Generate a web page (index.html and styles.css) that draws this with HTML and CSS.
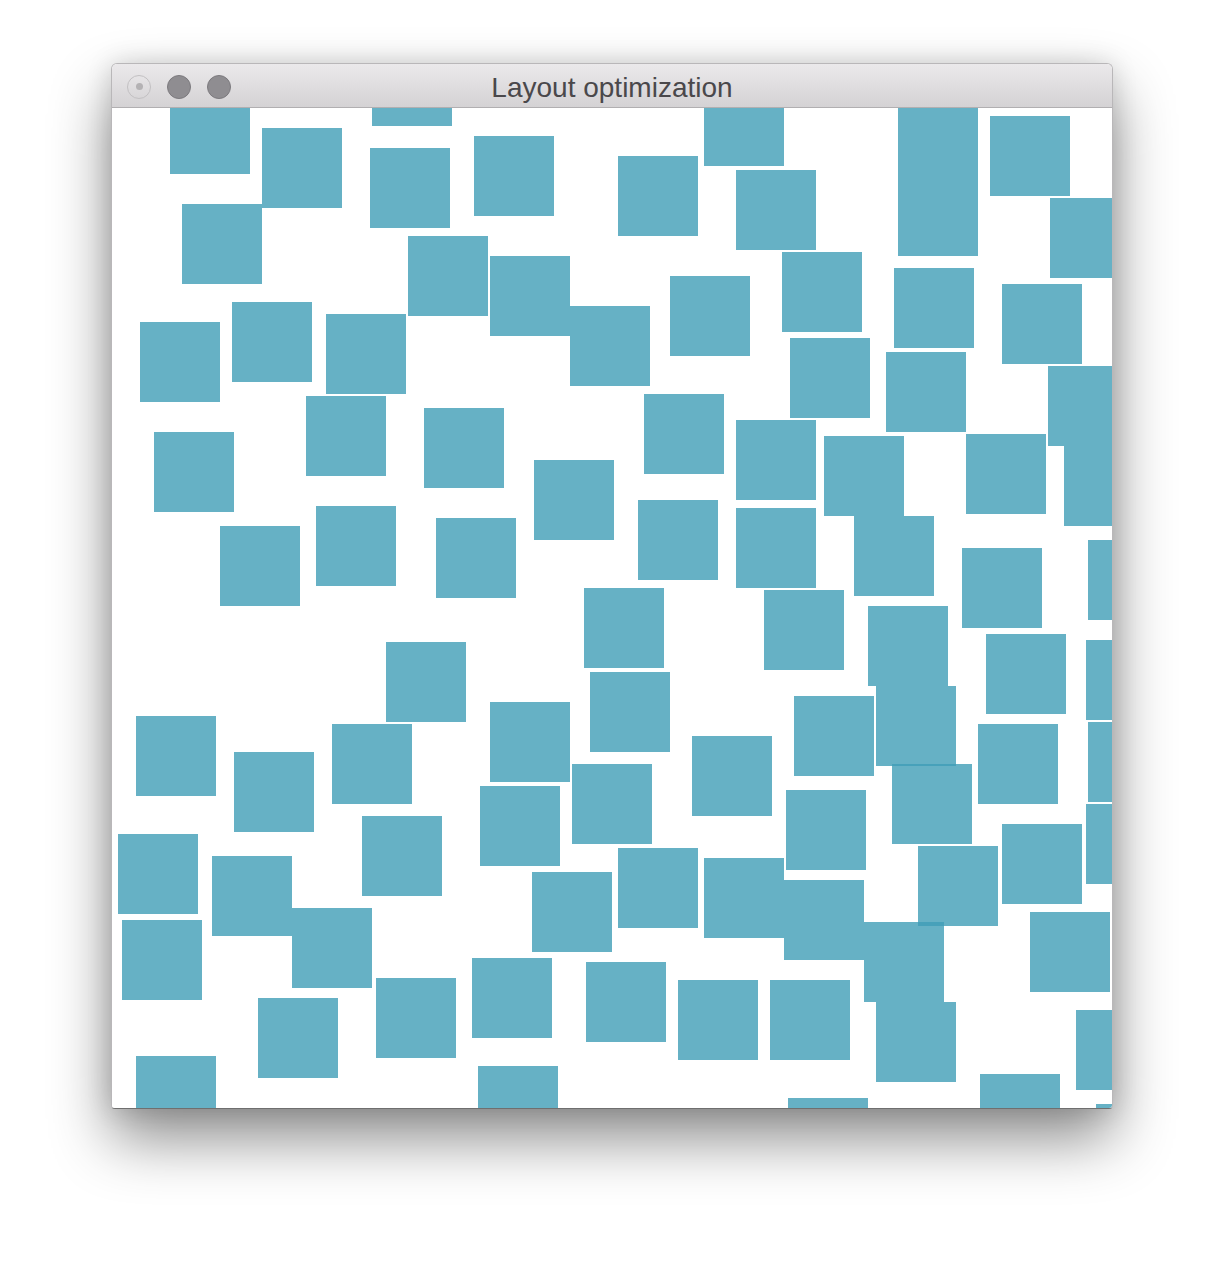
FILE: index.html
```html
<!DOCTYPE html>
<html lang="en">
<head>
    <meta charset="UTF-8">
    <meta name="viewport" content="width=device-width, initial-scale=1.0">
    <title>Layout optimization</title>
    <link rel="stylesheet" href="styles.css">
</head>
<body>

    <div class="window">
        <div class="titlebar">
            <div class="lights">
                <span class="light light-close"></span>
                <span class="light"></span>
                <span class="light"></span>
            </div>
            <div class="title">Layout optimization</div>
        </div>
        <div class="canvas" id="canvas">
            <!-- Boxes are placed here by the script -->
        </div>
    </div>

    <script>
        // Top-left corner of every 80x80 box, in canvas coordinates
        const boxes = [
            [58, -14], [150, 20], [260, -62], [258, 40], [362, 28], [506, 48],
            [592, -22], [624, 62], [786, -12], [786, 68], [878, 8], [938, 90],
            [70, 96], [296, 128], [378, 148], [458, 198], [558, 168], [670, 144],
            [782, 160], [890, 176], [28, 214], [120, 194], [214, 206], [678, 230],
            [774, 244], [936, 258], [42, 324], [194, 288], [312, 300], [532, 286],
            [624, 312], [712, 328], [854, 326], [952, 338], [422, 352], [108, 418],
            [204, 398], [324, 410], [526, 392], [624, 400], [742, 408], [850, 440],
            [976, 432], [472, 480], [652, 482], [756, 498], [874, 526], [974, 532],
            [274, 534], [478, 564], [764, 578], [24, 608], [122, 644], [220, 616],
            [378, 594], [580, 628], [682, 588], [866, 616], [976, 614], [780, 656],
            [460, 656], [368, 678], [674, 682], [974, 696], [6, 726], [100, 748],
            [250, 708], [890, 716], [806, 738], [506, 740], [592, 750], [672, 772],
            [752, 814], [420, 764], [180, 800], [10, 812], [918, 804], [360, 850],
            [264, 870], [474, 854], [566, 872], [658, 872], [764, 894], [146, 890],
            [964, 902], [24, 948], [366, 958], [676, 990], [868, 966], [984, 996]
        ];

        const canvas = document.getElementById('canvas');

        boxes.forEach(function(pos) {
            const box = document.createElement('div');
            box.className = 'box';
            box.style.left = pos[0] + 'px';
            box.style.top = pos[1] + 'px';
            canvas.appendChild(box);
        });
    </script>

</body>
</html>
```

FILE: styles.css
```css
html {
    background-color: #ffffff;
}
body {
    margin: 0;
    padding: 63px 0 0 111px;
    min-height: 1268px;
    box-sizing: border-box;
    background-color: #ffffff;
    font-family: "Liberation Sans", Arial, sans-serif;
}
.window {
    width: 1000px;
    border: 1px solid #b9b7b9;
    border-bottom-color: #6f6f6f;
    border-radius: 6px 6px 4px 4px;
    background: white;
    box-shadow: 0 30px 60px rgba(0, 0, 0, 0.45), 0 0 26px rgba(0, 0, 0, 0.14);
    overflow: hidden;
}
.titlebar {
    height: 43px;
    display: grid;
    grid-template-columns: 1fr auto 1fr;
    align-items: center;
    background: linear-gradient(#ebe9eb, #d4d2d4);
    border-bottom: 1px solid #b1afb1;
}
.lights {
    display: flex;
    gap: 16px;
    padding-left: 15px;
}
.light {
    width: 22px;
    height: 22px;
    border-radius: 50%;
    background-color: #8f8d91;
    border: 1px solid #7c7a7e;
}
.light-close {
    display: flex;
    align-items: center;
    justify-content: center;
    background: linear-gradient(#e6e4e6, #d8d6d8);
    border-color: #c2c0c2;
}
.light-close::after {
    content: "";
    width: 7px;
    height: 7px;
    border-radius: 50%;
    background-color: #b4b2b4;
}
.title {
    font-size: 28px;
    color: #4a484b;
    line-height: 43px;
    padding-top: 2px;
}
.canvas {
    position: relative;
    height: 1000px;
    overflow: hidden;
    background: white;
}
.box {
    position: absolute;
    width: 80px;
    height: 80px;
    background-color: rgba(64, 158, 183, 0.8); /* overlaps come out darker */
}
```
